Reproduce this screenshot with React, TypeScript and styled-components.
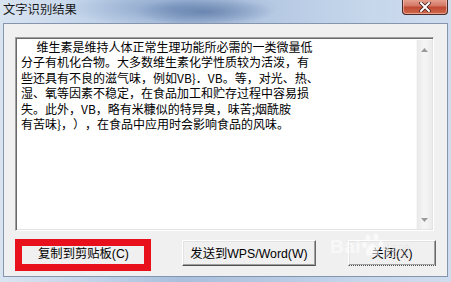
import React from 'react';
import styled, { createGlobalStyle } from 'styled-components';

const Global = createGlobalStyle`
  html, body { margin: 0; padding: 0; width: 451px; height: 282px; overflow: hidden; }
  body { font-family: "Noto Sans CJK SC", sans-serif; }
  #root { width: 451px; height: 282px; }
`;

const Window = styled.div`
  position: relative;
  width: 451px;
  height: 282px;
  box-sizing: border-box;
  padding: 0 3px 5px 3px;
  display: flex;
  flex-direction: column;
  background:
    radial-gradient(ellipse 70px 14px at 205px 12px, rgba(70, 100, 150, 0.55), rgba(70, 100, 150, 0) 100%),
    radial-gradient(ellipse 110px 18px at 170px 8px, rgba(110, 140, 185, 0.55), rgba(110, 140, 185, 0) 100%),
    linear-gradient(to right, #d9e4f1 0%, #c3d4ea 20%, #a9bfdc 40%, #b6c9e3 60%, #c5d6eb 80%, #cfdcee 100%);
`;

const TitleBar = styled.div`
  height: 23px;
  display: flex;
  align-items: flex-start;
`;

const Title = styled.div`
  padding-top: 2px;
  font-size: 12.3px;
  line-height: 15px;
  color: #1a1a1a;
`;

const CloseButton = styled.div`
  margin-left: auto;
  margin-top: -1px;
  width: 46px;
  height: 16px;
  box-sizing: border-box;
  border: 1px solid #4a2a2a;
  border-top: none;
  border-radius: 0 0 4px 4px;
  background: linear-gradient(to bottom, #e8a593 0%, #d47866 45%, #c04a33 55%, #cf6a4c 100%);
  box-shadow: inset 0 0 0 1px rgba(255, 220, 210, 0.5);
  display: flex;
  align-items: center;
  justify-content: center;
`;

const Client = styled.div`
  flex: 1;
  box-sizing: border-box;
  border: 1px solid #8495ad;
  background: #f0f0f0;
  padding: 13px 13px 0 11px;
  display: flex;
  flex-direction: column;
`;

const TextBox = styled.div`
  height: 194px;
  box-sizing: border-box;
  border-top: 1px solid #a0a0a0;
  border-left: 1px solid #a0a0a0;
  border-right: 1px solid #ffffff;
  border-bottom: 1px solid #ffffff;
  box-shadow: inset 1px 1px 0 #696969, inset -1px -1px 0 #e3e3e3;
  background: #ffffff;
  display: flex;
`;

const TextContent = styled.div`
  flex: 1;
  padding: 1px 0 0 5px;
  font-size: 12px;
  line-height: 15.4px;
  color: #000;
  white-space: pre;
  text-spacing-trim: space-all;
  font-feature-settings: "halt" 0, "chws" 0;
`;

const Line = styled.div<{ $indent?: boolean }>`
  height: 15.4px;
  text-indent: ${(p) => (p.$indent ? '15.5px' : '0')};
`;

const ScrollBar = styled.div`
  width: 16px;
  margin: 2px 1px 1px 0;
  background: linear-gradient(to right, #e8e8e8, #f4f4f4 40%, #f4f4f4 60%, #ebebeb);
  border-left: 1px solid #f8f8f8;
  display: flex;
  flex-direction: column;
  justify-content: space-between;
  align-items: center;
  padding: 8px 0 7px;
  box-sizing: border-box;
`;

const ButtonRow = styled.div`
  margin-top: 9px;
  display: flex;
  align-items: flex-start;
  padding-left: 5px;
`;

const ButtonSlot = styled.div<{ $offset: number }>`
  position: relative;
  margin-left: ${(p) => p.$offset}px;
`;

const Button = styled.div<{ $w: number; $focus?: boolean }>`
  width: ${(p) => p.$w}px;
  height: 26px;
  box-sizing: border-box;
  background: #f0f0f0;
  border-top: 1px solid #ffffff;
  border-left: 1px solid #ffffff;
  border-right: 1px solid #696969;
  border-bottom: 1px ${(p) => (p.$focus ? 'dotted' : 'solid')} #505050;
  box-shadow: inset -1px -1px 0 #a0a0a0, inset 1px 1px 0 #e3e3e3;
  display: flex;
  align-items: center;
  justify-content: center;
  font-family: "Liberation Sans", "Noto Sans CJK SC", sans-serif;
  font-size: 12.3px;
  color: #000;
  padding-bottom: 1px;
`;

const Highlight = styled.div`
  position: absolute;
  left: -5px;
  top: -1px;
  width: 136px;
  height: 32px;
  box-sizing: border-box;
  border: 7px solid #e8101a;
  pointer-events: none;
`;

const Watermark = styled.div`
  position: absolute;
  left: 330px;
  top: 232px;
  display: flex;
  align-items: center;
  gap: 1px;
  color: rgba(255, 255, 255, 0.6);
  pointer-events: none;
`;

const WmBai = styled.span`
  font-family: "Liberation Sans", sans-serif;
  font-weight: bold;
  font-size: 19px;
  letter-spacing: 0.5px;
  margin-top: 2px;
`;

const WmJy = styled.span`
  font-family: "Noto Sans CJK SC", sans-serif;
  font-size: 13px;
  margin-top: 8px;
  color: rgba(225, 225, 225, 0.55);
`;

const lines = [
  '维生素是维持人体正常生理功能所必需的一类微量低',
  '分子有机化合物。大多数维生素化学性质较为活泼，有',
  '些还具有不良的滋气味，例如VB}．VB。等，对光、热、',
  '湿、氧等因素不稳定，在食品加工和贮存过程中容易损',
  '失。此外，VB，略有米糠似的特异臭，味苦;烟酰胺',
  '有苦味}，），在食品中应用时会影响食品的风味。',
];

export default function App() {
  return (
    <>
      <Global />
      <Window>
        <TitleBar>
          <Title>文字识别结果</Title>
          <CloseButton>
            <svg width="12" height="10" viewBox="0 0 12 10">
              <path d="M2 1 L10 9 M10 1 L2 9" stroke="#3a1a1a" strokeWidth="3.4" strokeLinecap="square" />
              <path d="M2 1 L10 9 M10 1 L2 9" stroke="#ffffff" strokeWidth="2" strokeLinecap="square" />
            </svg>
          </CloseButton>
        </TitleBar>
        <Client>
          <TextBox>
            <TextContent>
              {lines.map((l, i) => (
                <Line key={i} $indent={i === 0}>{l}</Line>
              ))}
            </TextContent>
            <ScrollBar>
              <svg width="7" height="4" viewBox="0 0 7 4">
                <path d="M0 4 L3.5 0 L7 4 Z" fill="#9a9a9a" />
              </svg>
              <svg width="7" height="4" viewBox="0 0 7 4">
                <path d="M0 0 L3.5 4 L7 0 Z" fill="#9a9a9a" />
              </svg>
            </ScrollBar>
          </TextBox>
          <ButtonRow>
            <ButtonSlot $offset={0}>
              <Button $w={127}>复制到剪贴板(C)</Button>
              <Highlight />
            </ButtonSlot>
            <ButtonSlot $offset={35}>
              <Button $w={134}>发送到WPS/Word(W)</Button>
            </ButtonSlot>
            <ButtonSlot $offset={32}>
              <Button $w={88} $focus>关闭(X)</Button>
            </ButtonSlot>
          </ButtonRow>
        </Client>
        <Watermark>
          <WmBai>Bai</WmBai>
          <svg width="22" height="26" viewBox="0 0 22 26">
            <g fill="rgba(255,255,255,0.6)">
              <ellipse cx="6" cy="5" rx="2.6" ry="3.4" />
              <ellipse cx="14" cy="4" rx="2.6" ry="3.4" />
              <ellipse cx="2.5" cy="12" rx="2.3" ry="3" />
              <ellipse cx="19" cy="11" rx="2.3" ry="3" />
              <path d="M10 11 C6 11 3 18 4 21 C5 24 8 22 10.5 22 C13 22 16 24 17 21 C18 18 14 11 10 11 Z" />
            </g>
          </svg>
          <WmJy>经验</WmJy>
        </Watermark>
      </Window>
    </>
  );
}
